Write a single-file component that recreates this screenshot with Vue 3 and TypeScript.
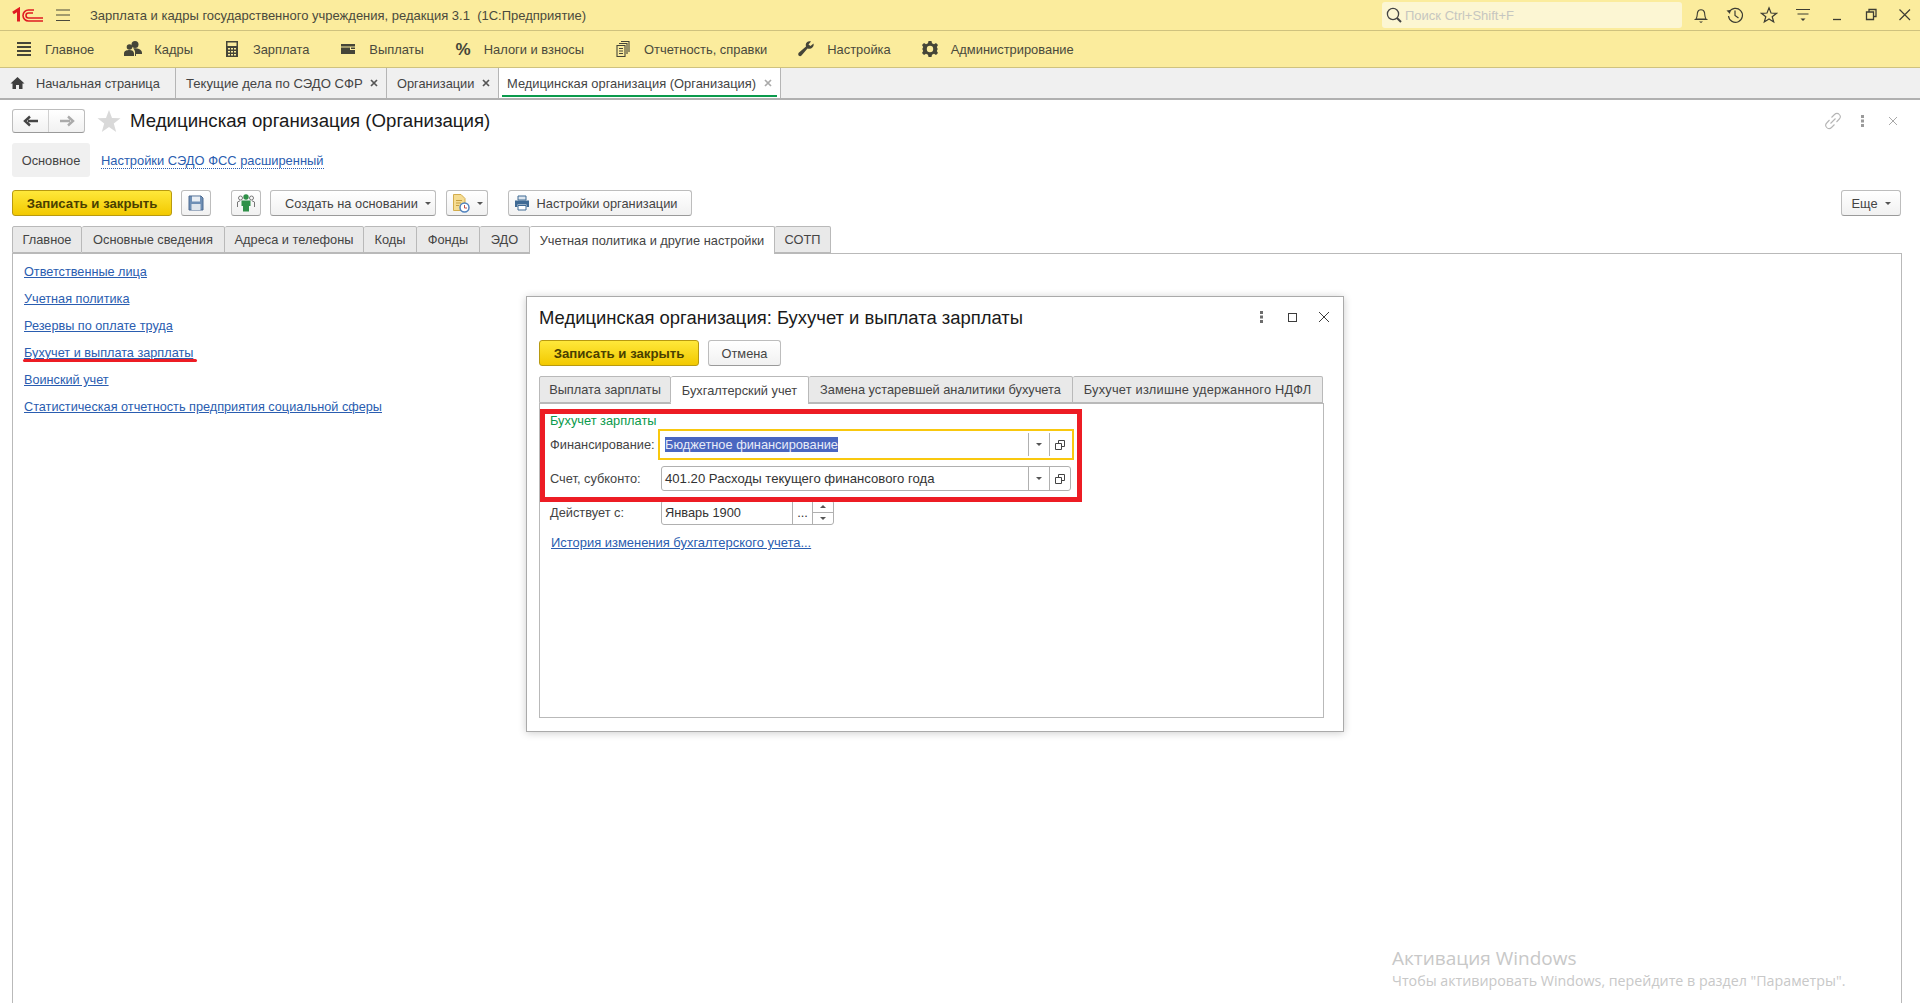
<script setup lang="ts">
const sections = [
  { id: "menu", label: "Главное" },
  { id: "people", label: "Кадры" },
  { id: "calc", label: "Зарплата" },
  { id: "wallet", label: "Выплаты" },
  { id: "percent", label: "Налоги и взносы" },
  { id: "docs", label: "Отчетность, справки" },
  { id: "wrench", label: "Настройка" },
  { id: "gear", label: "Администрирование" },
];

const openTabs = [
  { label: "Текущие дела по СЭДО СФР", width: 211, active: false, cls: "wide" },
  { label: "Организации", width: 112, active: false, cls: "" },
  { label: "Медицинская организация (Организация)", width: 282, active: true, cls: "current" },
];

const formTabs = [
  { label: "Главное", width: 70 },
  { label: "Основные сведения", width: 143 },
  { label: "Адреса и телефоны", width: 139 },
  { label: "Коды", width: 53 },
  { label: "Фонды", width: 63 },
  { label: "ЭДО", width: 50 },
  { label: "Учетная политика и другие настройки", width: 245, active: true },
  { label: "СОТП", width: 56 },
];

const links = [
  "Ответственные лица",
  "Учетная политика",
  "Резервы по оплате труда",
  "Бухучет и выплата зарплаты",
  "Воинский учет",
  "Статистическая отчетность предприятия социальной сферы",
];

const dialogTabs = [
  { label: "Выплата зарплаты", width: 132 },
  { label: "Бухгалтерский учет", width: 138, active: true },
  { label: "Замена устаревшей аналитики бухучета", width: 264 },
  { label: "Бухучет излишне удержанного НДФЛ", width: 250 },
];
</script>

<template>
  <div class="app">
    <header class="titlebar">
      <svg class="logo" width="32" height="16" viewBox="0 0 32 16">
        <path d="M1 6 L6.500 2.500 V14.500" fill="none" stroke="#e01b22" stroke-width="3" />
        <path d="M22 3 H16.500 a5.500 5.500 0 0 0 0 11 H31" fill="none" stroke="#e01b22" stroke-width="1.600" />
        <path d="M21 6 H16.500 a2.500 2.500 0 0 0 0 5 H31" fill="none" stroke="#e01b22" stroke-width="1.600" />
      </svg>
      <svg class="burger" width="16" height="14" viewBox="0 0 16 14">
        <path d="M1 2 H15 M1 7 H15 M1 12.500 H15" stroke="#4a4a3c" stroke-width="1.200" />
      </svg>
      <span class="app-title">Зарплата и кадры государственного учреждения, редакция 3.1&nbsp; (1С:Предприятие)</span>
      <div class="search">
        <svg width="18" height="18" viewBox="0 0 18 18">
          <circle cx="8" cy="8" r="5.600" fill="none" stroke="#444" stroke-width="1.300" />
          <path d="M12 12 L16 16" stroke="#444" stroke-width="2" />
        </svg>
        <span>Поиск Ctrl+Shift+F</span>
      </div>
      <div class="title-icons">
        <svg width="18" height="18" viewBox="0 0 18 18">
          <path d="M4 13 c1.500-2 1-4 1.500-6.500 a3.600 3.600 0 0 1 7 0 c.5 2.500 0 4.500 1.500 6.500 Z M2.500 13.500 H15.500" fill="none" stroke="#3d3d33" stroke-width="1.100" />
          <path d="M7 15.500 H11 L9 17 Z" fill="#3d3d33" />
        </svg>
        <svg width="18" height="18" viewBox="0 0 18 18">
          <path d="M3.300 6 A7 7 0 1 1 2.500 10" fill="none" stroke="#3d3d33" stroke-width="1.200" />
          <path d="M0.500 4.500 L4.500 4 L4 8 Z" fill="#3d3d33" />
          <path d="M9 4.500 V9.500 L12.500 12" fill="none" stroke="#3d3d33" stroke-width="1.200" />
        </svg>
        <svg width="18" height="18" viewBox="0 0 18 18">
          <path d="M9 1.800 L11 7 L16.500 7.300 L12.200 10.700 L13.700 16 L9 13 L4.300 16 L5.800 10.700 L1.500 7.300 L7 7 Z" fill="none" stroke="#3d3d33" stroke-width="1.200" />
        </svg>
        <svg width="18" height="18" viewBox="0 0 18 18">
          <path d="M2 3.500 H16 M3.500 8 H14.500" stroke="#3d3d33" stroke-width="1.200" />
          <path d="M6.500 12.500 H11.500 L9 15 Z" fill="#3d3d33" />
        </svg>
        <svg width="18" height="18" viewBox="0 0 18 18">
          <path d="M5 13.500 H13" stroke="#3d3d33" stroke-width="1.300" />
        </svg>
        <svg width="18" height="18" viewBox="0 0 18 18">
          <path d="M7 6 V3.500 H14 V10.500 H11.500 M4.500 6 H11.500 V13.500 H4.500 Z" fill="none" stroke="#3d3d33" stroke-width="1.300" />
        </svg>
        <svg width="18" height="18" viewBox="0 0 18 18">
          <path d="M3.500 3.500 L14 14 M14 3.500 L3.500 14" stroke="#3d3d33" stroke-width="1.200" />
        </svg>
      </div>
    </header>

    <nav class="sections">
      <div v-for="s in sections" :key="s.id" class="section">
        <svg width="20" height="20" viewBox="0 0 20 20" fill="#454538">
          <path v-if="s.id === 'menu'" d="M3 3 H17 V5 H3 Z M3 7 H17 V9 H3 Z M3 11 H17 V13 H3 Z M3 15 H17 V17 H3 Z" />
          <g v-else-if="s.id === 'people'">
            <circle cx="12" cy="5.500" r="3.500" />
            <circle cx="6.500" cy="8" r="2.800" />
            <path d="M1 17 V14.500 C1 11.500 4 11 6.500 11 C9 11 11 12 11 14.500 V17 Z M12 17 V13 C12 11.500 11 10 10 9.500 C12 9 14 9 16 10 C18 11 19 12 19 14 V15 H13 V17 Z" />
          </g>
          <path v-else-if="s.id === 'calc'" fill-rule="evenodd" d="M4 2 H16 V18 H4 Z M5.500 3.500 V7 H14.500 V3.500 Z M6 9 V10.500 H8 V9 Z M9 9 V10.500 H11 V9 Z M12 9 V10.500 H14 V9 Z M6 12 V13.500 H8 V12 Z M9 12 V13.500 H11 V12 Z M12 12 V13.500 H14 V12 Z M6 15 V16.500 H8 V15 Z M9 15 V16.500 H11 V15 Z M12 15 V16.500 H14 V15 Z" />
          <path v-else-if="s.id === 'wallet'" d="M3 5 H17 V7.500 H3 Z M3 8.500 H12 V11 H17 V15 H3 Z M13 8.500 H17 V10 H13 Z" />
          <text v-else-if="s.id === 'percent'" x="10" y="16" text-anchor="middle" font-size="17" font-weight="700" font-family="Liberation Sans, sans-serif">%</text>
          <g v-else-if="s.id === 'docs'" fill="none" stroke="#454538" stroke-width="1.100">
            <path d="M8 2.500 H16 V13 M6 4.500 H14 V15 M4 6.500 H12 V17.500 H4 Z M6 9.500 H10 M6 12 H10 M6 14.500 H10" />
          </g>
          <path v-else-if="s.id === 'wrench'" d="M17.500 4.500 L14.500 7 L12.500 5.500 L15 2.500 C12.500 1.500 10 3 9.800 5.500 C9.700 6.500 10 7 10 7.500 L3 13.500 C1 15.500 3.500 18.500 5.500 16.500 L11.500 9.500 C14.500 10.500 18.500 8.500 17.500 4.500 Z" />
          <path v-else fill-rule="evenodd" d="M8.500 2 H11.500 L12 4.300 L14 5.200 L16 4 L18 6 L16.800 8 L17.700 10 L16.800 12 L18 14 L16 16 L14 14.800 L12 15.700 L11.500 18 H8.500 L8 15.700 L6 14.800 L4 16 L2 14 L3.200 12 L2.300 10 L3.200 8 L2 6 L4 4 L6 5.200 L8 4.300 Z M10 6.800 A3.200 3.200 0 1 0 10 13.200 A3.200 3.200 0 1 0 10 6.800 Z" />
        </svg>
        <span>{{ s.label }}</span>
      </div>
    </nav>

    <div class="open-tabs">
      <div class="open-tab home">
        <svg width="15" height="14" viewBox="0 0 15 14" fill="#3f3f3f">
          <path d="M7.500 1 L14.500 7.500 H12.500 V13 H9 V9 H6 V13 H2.500 V7.500 H0.500 Z" />
        </svg>
        <span>Начальная страница</span>
      </div>
      <div
        v-for="t in openTabs"
        :key="t.label"
        class="open-tab"
        :class="t.cls"
        :style="{ width: t.width + 'px' }"
      >
        <span>{{ t.label }}</span>
        <svg class="tab-x" width="8" height="8" viewBox="0 0 8 8"><path d="M1 1 L7 7 M7 1 L1 7" stroke-width="1.700" /></svg>
      </div>
    </div>

    <main class="page">
      <div class="page-head">
        <div class="nav-arrows">
          <button class="arrow">
            <svg width="16" height="12" viewBox="0 0 16 12"><path d="M15 6 H5 M7 1.500 L2 6 L7 10.500" fill="none" stroke="#444" stroke-width="2.400" /></svg>
          </button>
          <button class="arrow">
            <svg width="16" height="12" viewBox="0 0 16 12"><path d="M1 6 H11 M9 1.500 L14 6 L9 10.500" fill="none" stroke="#aaa" stroke-width="2.400" /></svg>
          </button>
        </div>
        <svg class="star" width="24" height="24" viewBox="0 0 24 24" fill="#d9d9d9">
          <path d="M12 1 L15 9 L23.500 9.300 L16.800 14.500 L19.200 23 L12 18 L4.800 23 L7.200 14.500 L0.500 9.300 L9 9 Z" />
        </svg>
        <h1>Медицинская организация (Организация)</h1>
        <div class="head-tools">
          <svg class="link-icon" width="18" height="18" viewBox="0 0 18 18" fill="none" stroke="#b5b5b5" stroke-width="1.100">
            <path d="M7.500 5.500 L10.500 2.500 C12 1 14 1 15.300 2.500 C16.500 3.800 16.500 5.800 15.300 7 L12.500 10" />
            <path d="M10.500 12.500 L7.500 15.500 C6 17 4 17 2.700 15.500 C1.500 14.200 1.500 12.200 2.700 11 L5.500 8 M6.500 11.500 L11.500 6.500" />
          </svg>
          <svg width="6" height="14" viewBox="0 0 6 14" fill="#9a9a9a">
            <rect x="1" y="1" width="3" height="3" /><rect x="1" y="5.500" width="3" height="3" /><rect x="1" y="10" width="3" height="3" />
          </svg>
          <svg width="12" height="12" viewBox="0 0 12 12"><path d="M2 2 L10 10 M10 2 L2 10" stroke="#a8a8a8" stroke-width="1" /></svg>
        </div>
      </div>

      <div class="page-nav">
        <div class="page-nav-tile">Основное</div>
        <a class="dotted-link">Настройки СЭДО ФСС расширенный</a>
      </div>

      <div class="toolbar">
        <button class="btn primary w160">Записать и закрыть</button>
        <button class="btn icon-btn ml9">
          <svg width="16" height="16" viewBox="0 0 16 16">
            <path d="M1 1 H13 L15 3 V15 H1 Z" fill="#6f8fb5" stroke="#4d6b91" />
            <rect x="4" y="1.500" width="8" height="5" fill="#e9eef4" />
            <rect x="3.500" y="9" width="9" height="6" fill="#dfe5ec" />
          </svg>
        </button>
        <button class="btn icon-btn ml20">
          <svg width="20" height="20" viewBox="0 0 20 20">
            <circle cx="4.500" cy="5" r="2" fill="none" stroke="#777" />
            <circle cx="15.500" cy="5" r="2" fill="none" stroke="#777" />
            <path d="M1.500 14 V9 L4 7.800 M18.500 14 V9 L16 7.800" fill="none" stroke="#777" />
            <circle cx="10" cy="4" r="2.700" fill="#2f9048" />
            <path d="M5.500 7.500 H14.500 V13 H13 V18.500 H7 V13 H5.500 Z" fill="#2f9048" />
          </svg>
        </button>
        <button class="btn ml9 w166">Создать на основании <i class="caret"></i></button>
        <button class="btn ml10 w42">
          <svg width="18" height="20" viewBox="0 0 18 20">
            <path d="M1.500 1.500 H9 L13 5.500 V17.500 H1.500 Z" fill="#f5dc92" stroke="#d3ad4d" />
            <path d="M4 7.500 H10 M4 10 H9 M4 12.500 H7" stroke="#c79f40" />
            <circle cx="12.500" cy="14.500" r="4.500" fill="#fff" stroke="#4f81bd" stroke-width="1.500" />
            <path d="M12.500 12 V15 H15" fill="none" stroke="#c0504d" />
          </svg>
          <i class="caret"></i>
        </button>
        <button class="btn ml20 w184">
          <svg width="16" height="16" viewBox="0 0 16 16" fill="#3f6a94">
            <path d="M4 1 H12 V5 H4 Z" fill="#dce5ee" stroke="#3f6a94" />
            <path d="M1 5.500 H15 V12 H12.500 V9.500 H3.500 V12 H1 Z" />
            <path d="M4 10.500 H12 V15 H4 Z" fill="#fff" stroke="#3f6a94" />
          </svg>
          <span>Настройки организации</span>
        </button>
        <button class="btn more">Еще <i class="caret"></i></button>
      </div>

      <div class="tabs">
        <div
          v-for="t in formTabs"
          :key="t.label"
          class="tab"
          :class="{ active: t.active }"
          :style="{ width: t.width + 'px' }"
        >
          {{ t.label }}
        </div>
      </div>

      <section class="tab-body">
        <a v-for="l in links" :key="l" class="link">{{ l }}</a>
      </section>
    </main>

    <div class="underline-mark"></div>

    <div class="dialog">
      <div class="dialog-head">
        <h2>Медицинская организация: Бухучет и выплата зарплаты</h2>
        <div class="dialog-tools">
          <svg class="kebab" width="6" height="14" viewBox="0 0 6 14" fill="#6c6c6c">
            <rect x="1" y="1" width="3" height="3" /><rect x="1" y="5.500" width="3" height="3" /><rect x="1" y="10" width="3" height="3" />
          </svg>
          <svg width="11" height="11" viewBox="0 0 11 11"><rect x="1.500" y="1.500" width="8" height="8" fill="none" stroke="#3c3c3c" /></svg>
          <svg width="12" height="12" viewBox="0 0 12 12"><path d="M1 1 L11 11 M11 1 L1 11" stroke="#3c3c3c" stroke-width="1" /></svg>
        </div>
      </div>
      <div class="dialog-buttons">
        <button class="btn primary w160">Записать и закрыть</button>
        <button class="btn w73">Отмена</button>
      </div>
      <div class="tabs">
        <div
          v-for="t in dialogTabs"
          :key="t.label"
          class="tab"
          :class="{ active: t.active }"
          :style="{ width: t.width + 'px' }"
        >
          {{ t.label }}
        </div>
      </div>
      <section class="dialog-body">
        <div class="group-title">Бухучет зарплаты</div>
        <div class="row first">
          <label>Финансирование:</label>
          <div class="field focused">
            <div class="value"><span class="selected">Бюджетное финансирование</span></div>
            <div class="cell"><i class="caret"></i></div>
            <div class="cell">
              <svg width="10" height="10" viewBox="0 0 10 10"><path d="M3.500 3 V.500 H9.500 V6.500 H7 M.500 3.500 H6.500 V9.500 H.500 Z" fill="none" stroke="#444" /></svg>
            </div>
          </div>
        </div>
        <div class="row">
          <label>Счет, субконто:</label>
          <div class="field">
            <div class="value account">401.20 Расходы текущего финансового года</div>
            <div class="cell"><i class="caret"></i></div>
            <div class="cell">
              <svg width="10" height="10" viewBox="0 0 10 10"><path d="M3.500 3 V.500 H9.500 V6.500 H7 M.500 3.500 H6.500 V9.500 H.500 Z" fill="none" stroke="#444" /></svg>
            </div>
          </div>
        </div>
        <div class="row">
          <label>Действует с:</label>
          <div class="field date">
            <div class="value">Январь 1900</div>
            <div class="cell dots">...</div>
            <div class="spin">
              <div><i class="caret up"></i></div>
              <div><i class="caret"></i></div>
            </div>
          </div>
        </div>
        <a class="link history">История изменения бухгалтерского учета...</a>
      </section>
    </div>

    <div class="red-box"></div>

    <div class="watermark">
      <div class="wm-big">Активация Windows</div>
      <div class="wm-small">Чтобы активировать Windows, перейдите в раздел "Параметры".</div>
    </div>
  </div>
</template>

<style>
html,
body {
  margin: 0;
  height: 100%;
  overflow: hidden;
  background: #fff;
}
</style>

<style scoped>
.app {
  position: relative;
  display: flex;
  flex-direction: column;
  height: 100vh;
  overflow: hidden;
  font-family: "Liberation Sans", Arial, sans-serif;
  font-size: 12.800px;
  color: #333;
}
.titlebar {
  display: flex;
  align-items: center;
  flex: none;
  height: 30px;
  padding: 0 0 0 12px;
  background: #fbec9d;
  border-bottom: 1px solid #cfc27e;
  font-size: 13px;
}
.logo {
  flex: none;
}
.burger {
  flex: none;
  margin-left: 11px;
}
.app-title {
  margin-left: 19px;
  color: #4a4a3c;
}
.search {
  display: flex;
  align-items: center;
  gap: 2px;
  width: 300px;
  height: 26px;
  margin-left: auto;
  padding-left: 3px;
  box-sizing: border-box;
  background: #fcf6d3;
  border-radius: 3px;
  color: #c6c6c0;
}
.title-icons {
  display: flex;
  align-items: center;
  gap: 16px;
  margin-left: 10px;
  padding-right: 6px;
}
.sections {
  display: flex;
  align-items: center;
  flex: none;
  height: 36px;
  padding-left: 14px;
  background: #fbec9d;
  border-bottom: 1px solid #cfc27e;
  color: #4a4a3c;
  font-size: 12.900px;
}
.section {
  display: flex;
  align-items: center;
  gap: 11px;
  margin-right: 29px;
}
.open-tabs {
  display: flex;
  flex: none;
  height: 30px;
  background: #f0f0f0;
  border-bottom: 2px solid #b0b0b0;
}
.open-tab {
  display: flex;
  align-items: center;
  justify-content: space-between;
  box-sizing: border-box;
  padding: 0 8px 0 10px;
  border-right: 1px solid #b5b5b5;
  color: #444;
  white-space: nowrap;
}
.open-tab.home {
  width: 176px;
  justify-content: flex-start;
  gap: 11px;
}
.open-tab.wide {
  font-size: 13.150px;
}
.open-tab.current {
  background: #fff;
  position: relative;
  font-size: 12.900px;
  padding-left: 8px;
}
.open-tab.current::after {
  content: "";
  position: absolute;
  left: 3px;
  right: 3px;
  bottom: 1px;
  height: 2px;
  background: #0a9a4c;
}
.tab-x {
  flex: none;
  stroke: #555;
}
.current .tab-x {
  stroke: #aaa;
}
.page {
  display: flex;
  flex-direction: column;
  flex: 1;
  min-height: 0;
  padding: 8px 18px 0 12px;
}
.page-head {
  display: flex;
  align-items: center;
  height: 25px;
}
.nav-arrows {
  display: flex;
  width: 73px;
  height: 24px;
  box-sizing: border-box;
  border: 1px solid #bdbdbd;
  border-bottom-color: #9a9a9a;
  border-radius: 3px;
  background: linear-gradient(#fff, #f1f1f1);
}
.arrow {
  flex: 1;
  display: flex;
  align-items: center;
  justify-content: center;
  padding: 0;
  border: 0;
  background: none;
}
.arrow + .arrow {
  border-left: 1px solid #d0d0d0;
}
.star {
  margin-left: 12px;
}
h1 {
  margin: 0 0 0 9px;
  font-size: 18.650px;
  font-weight: 400;
  color: #1a1a1a;
}
.head-tools {
  display: flex;
  align-items: center;
  gap: 21px;
  margin-left: auto;
  padding-right: 3px;
}
.link-icon {
  margin-right: -3px;
}
.page-nav {
  display: flex;
  align-items: center;
  gap: 11px;
  height: 34px;
  margin-top: 10px;
}
.page-nav-tile {
  display: flex;
  align-items: center;
  justify-content: center;
  width: 78px;
  height: 34px;
  background: #f0f0f0;
  border-radius: 3px;
  color: #444;
}
.dotted-link {
  margin-top: 2px;
  color: #2a5db0;
  border-bottom: 1px dotted #2a5db0;
  line-height: 14px;
  font-size: 12.900px;
}
.toolbar {
  display: flex;
  align-items: center;
  height: 26px;
  margin-top: 13px;
}
.btn {
  display: flex;
  align-items: center;
  justify-content: center;
  gap: 7px;
  height: 26px;
  padding: 0;
  box-sizing: border-box;
  border: 1px solid #bdbdbd;
  border-bottom-color: #9a9a9a;
  border-radius: 3px;
  background: linear-gradient(#fff, #f1f1f1);
  font: inherit;
  color: #444;
}
.btn.primary {
  background: linear-gradient(#ffe83a, #f2c900);
  border-color: #b89a10;
  color: #4a3f00;
  font-weight: 700;
  font-size: 13.200px;
}
.w160 {
  width: 160px;
}
.w166 {
  width: 166px;
  padding-left: 10px;
}
.w42 {
  width: 42px;
}
.w184 {
  width: 184px;
  padding-right: 9px;
}
.w73 {
  width: 73px;
}
.icon-btn {
  width: 30px;
}
.ml9 {
  margin-left: 9px;
}
.ml10 {
  margin-left: 10px;
}
.ml20 {
  margin-left: 20px;
}
.more {
  width: 60px;
  margin-left: auto;
  margin-right: 1px;
}
.caret {
  display: inline-block;
  width: 0;
  height: 0;
  border-left: 3px solid transparent;
  border-right: 3px solid transparent;
  border-top: 3px solid #555;
}
.caret.up {
  border-top: 0;
  border-bottom: 3px solid #555;
}
.tabs {
  display: flex;
  flex: none;
  height: 27px;
  margin-top: 10px;
}
.tab {
  display: flex;
  align-items: center;
  justify-content: center;
  box-sizing: border-box;
  height: 27px;
  background: #e9e9e9;
  border: 1px solid #b9b9b9;
  border-left-width: 0;
  border-radius: 2px 2px 0 0;
  color: #444;
  white-space: nowrap;
}
.tab:first-child {
  border-left-width: 1px;
}
.tab.active {
  height: 28px;
  background: #fff;
  border-bottom: 0;
  position: relative;
  z-index: 1;
}
.tab-body {
  display: flex;
  flex-direction: column;
  align-items: flex-start;
  gap: 13px;
  flex: 1;
  margin-bottom: -2px;
  padding: 11px 11px;
  border: 1px solid #b9b9b9;
}
.link {
  color: #2a5db0;
  font-size: 12.700px;
  text-decoration: underline;
  line-height: 14px;
}
.underline-mark {
  position: absolute;
  left: 23px;
  top: 359px;
  width: 174px;
  height: 3px;
  border-radius: 2px;
  background: #ed1c24;
}
.dialog {
  position: absolute;
  left: 526px;
  top: 296px;
  display: flex;
  flex-direction: column;
  width: 818px;
  height: 436px;
  box-sizing: border-box;
  padding: 0 19px 0 12px;
  background: #fff;
  border: 1px solid #aaa;
  box-shadow: 0 1px 8px rgba(0, 0, 0, 0.2);
}
.dialog-head {
  display: flex;
  align-items: center;
  justify-content: space-between;
  height: 42px;
}
h2 {
  margin: 0;
  font-size: 18.450px;
  font-weight: 400;
  color: #1a1a1a;
}
.dialog-tools {
  display: flex;
  align-items: center;
  gap: 20px;
  margin-right: -6px;
  margin-bottom: 2px;
}
.kebab {
  margin-right: 2px;
}
.dialog-buttons {
  display: flex;
  gap: 9px;
  margin-top: 1px;
}
.dialog .tabs {
  margin-top: 10px;
}
.dialog .tab:last-child {
  letter-spacing: 0.220px;
}
.dialog-body {
  display: flex;
  flex-direction: column;
  flex: none;
  height: 315px;
  box-sizing: border-box;
  padding: 10px 10px;
  border: 1px solid #b9b9b9;
}
.group-title {
  color: #0a9a4c;
  line-height: 14px;
}
.row {
  display: flex;
  align-items: center;
  height: 25px;
  margin-top: 9px;
}
.row.first {
  margin-top: 4px;
}
.row label {
  width: 111px;
  flex: none;
  color: #444;
}
.field {
  display: flex;
  align-items: center;
  width: 410px;
  height: 25px;
  box-sizing: border-box;
  border: 1px solid #b0b0b0;
  border-radius: 3px;
  color: #333;
}
.field.focused {
  outline: 2px solid #f9c80e;
  outline-offset: 1px;
  border-radius: 0;
  border-color: transparent;
}
.field.date {
  width: 173px;
}
.value {
  flex: 1;
  padding-left: 3px;
  white-space: nowrap;
}
.value.account {
  font-size: 13.150px;
}
.selected {
  background: #4a66c0;
  color: #e8ecf8;
  padding: 0;
}
.cell {
  display: flex;
  align-items: center;
  justify-content: center;
  width: 20px;
  height: 100%;
  border-left: 1px solid #b0b0b0;
}
.dots {
  align-items: flex-end;
  padding-bottom: 4px;
  box-sizing: border-box;
}
.spin {
  width: 20px;
  height: 100%;
  display: flex;
  flex-direction: column;
  border-left: 1px solid #b0b0b0;
}
.spin div {
  flex: 1;
  display: flex;
  align-items: center;
  justify-content: center;
}
.spin div + div {
  border-top: 1px solid #b0b0b0;
}
.history {
  margin-top: 11px;
  margin-left: 1px;
  align-self: flex-start;
  font-size: 12.950px;
}
.red-box {
  position: absolute;
  left: 540px;
  top: 409px;
  width: 542px;
  height: 93px;
  box-sizing: border-box;
  border: 5px solid #ed1c24;
  pointer-events: none;
}
.watermark {
  position: absolute;
  left: 1392px;
  top: 944px;
  color: #c8c8c8;
  font-family: "Open Sans", sans-serif;
}
.wm-big {
  font-size: 19px;
  line-height: 28px;
}
.wm-small {
  font-size: 14.250px;
  line-height: 18px;
}
</style>
